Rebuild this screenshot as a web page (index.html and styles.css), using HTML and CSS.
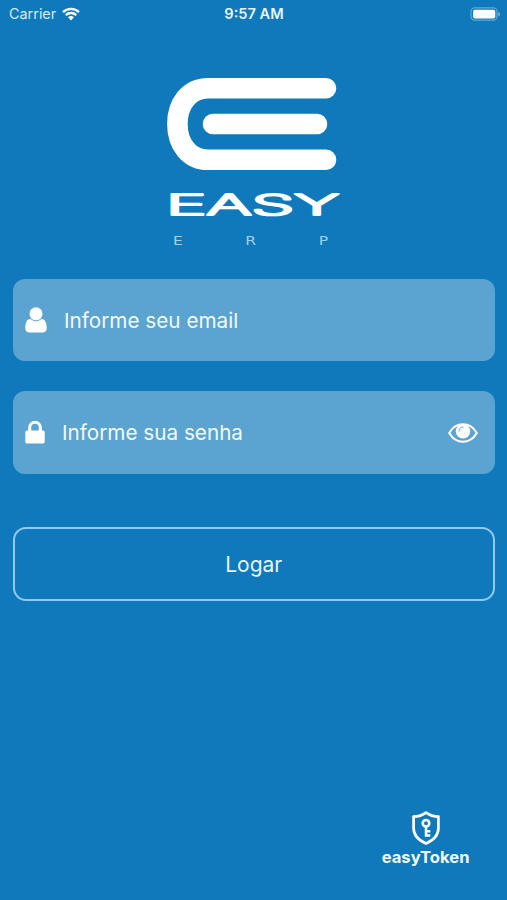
FILE: index.html
```
<!DOCTYPE html>
<html lang="pt-BR">
<head>
    <meta charset="UTF-8">
    <meta name="viewport" content="width=device-width, initial-scale=1.0">
    <title>Easy ERP - Login</title>
    <link rel="stylesheet" href="styles.css">
</head>
<body>
    <div class="status-bar">
        <div class="carrier">
            <span class="carrier-name">Carrier</span>
            <svg class="wifi" viewBox="0 0 18 14" width="18" height="14">
                <path d="M1 5.2a11.5 11.5 0 0 1 16 0M3.8 8.1a7.5 7.5 0 0 1 10.4 0" fill="none" stroke="#fff" stroke-width="2.3"/>
                <path d="M6 10.3a4.4 4.4 0 0 1 6 0L9 13.4z" fill="#fff"/>
            </svg>
        </div>
        <span class="time">9:57 AM</span>
        <svg class="battery" viewBox="0 0 31 14" width="31" height="14">
            <rect x="1" y=".8" width="26" height="12.4" rx="3.6" fill="none" stroke="#62a9d6" stroke-width="1.2"/>
            <rect x="3" y="2.7" width="22.3" height="8.8" rx="2" fill="#fff"/>
            <path d="M28.4 5v4.4c2-.7 2-3.7 0-4.4z" fill="#7dbbe2"/>
        </svg>
    </div>

    <div class="logo">
        <svg viewBox="0 0 174 93" width="174" height="93">
            <path d="M159 11.3H41C22 11.3 10.4 27 10.4 47S22 82.7 41 82.7H159" fill="none" stroke="#fff" stroke-width="20.6" stroke-linecap="round"/>
            <path d="M46 47H150" stroke="#fff" stroke-width="20.6" stroke-linecap="round"/>
        </svg>
        <svg class="logo-name" viewBox="0 0 180 36" width="180" height="36">
            <text x="2" y="29" textLength="173" lengthAdjust="spacingAndGlyphs">EASY</text>
        </svg>
        <div class="logo-sub"><span>E</span><span>R</span><span>P</span></div>
    </div>

    <form class="login-form">
        <label class="field">
            <svg class="user-icon" viewBox="0 0 22 26" width="22" height="26">
                <circle cx="11" cy="6.8" r="6.5" fill="#fff"/>
                <path d="M5.2 11.8C1.5 12.5.3 16.5.3 21c0 3 1.7 4.5 4.3 4.5h12.800c2.600 0 4.300-1.500 4.300-4.500 0-4.500-1.200-8.500-4.900-9.200-3.200 3.100-8.400 3.100-11.600 0z" fill="#fff"/>
            </svg>
            <input type="text" placeholder="Informe seu email">
        </label>

        <label class="field">
            <svg class="lock-icon" viewBox="0 0 20 24" width="20" height="24">
                <path d="M4.7 12V7.500a5.300 5.300 0 0 1 10.600 0V12" fill="none" stroke="#fff" stroke-width="3"/>
                <rect x=".3" y="10.6" width="19.4" height="12.8" rx="1.6" fill="#fff"/>
            </svg>
            <input type="password" placeholder="Informe sua senha">
            <svg class="eye-icon" viewBox="0 0 30 20" width="30" height="20">
                <path d="M1.2 10C4.5 4.3 9.5 1.3 15 1.3S25.5 4.3 28.8 10C25.5 15.7 20.5 18.7 15 18.7S4.5 15.7 1.2 10z" fill="none" stroke="#fff" stroke-width="2.1" stroke-linejoin="round"/>
                <circle cx="15" cy="8.3" r="7.2" fill="#fff"/>
                <path d="M11 8c0-2.3 1.7-3.9 4-3.9" fill="none" stroke="#5ba3d0" stroke-width="1" stroke-linecap="round"/>
            </svg>
        </label>

        <button type="submit">Logar</button>
    </form>

    <a class="token" href="#">
        <svg viewBox="0 0 28 34" width="28" height="34">
            <path d="M14 1.6C10.5 4.2 6 5.6 1.6 5.7V17c0 7.5 5.4 12.5 12.4 15.4C21 29.5 26.4 24.5 26.4 17V5.7C22 5.6 17.5 4.2 14 1.6z" fill="none" stroke="#fff" stroke-width="2.7" stroke-linejoin="round"/>
            <circle cx="14" cy="12.3" r="3.3" fill="none" stroke="#fff" stroke-width="2.6"/>
            <path d="M14 16v9.800M14 20.300h4.300M14 24.400h4.300" fill="none" stroke="#fff" stroke-width="2.5"/>
        </svg>
        <span>easyToken</span>
    </a>
</body>
</html>
```

FILE: styles.css
```
* {
    box-sizing: border-box;
}
body {
    font-family: Inter, "Liberation Sans", sans-serif;
    background-color: #1079bb;
    color: #ffffff;
    margin: 0;
    height: 900px;
    display: flex;
    flex-direction: column;
}
.status-bar {
    display: grid;
    grid-template-columns: 1fr auto 1fr;
    align-items: center;
    height: 28px;
    padding: 0 6px 1px 9px;
    font-size: 14.4px;
}
.carrier {
    display: flex;
    align-items: center;
    gap: 6px;
}
.carrier-name {
    color: #d3ebfa;
}
.time {
    font-weight: 600;
    color: #e6f5fd;
    font-size: 14.6px;
    margin-right: 2px;
}
.battery {
    justify-self: end;
}
.logo {
    display: flex;
    flex-direction: column;
    align-items: center;
    margin-top: 49px;
    height: 201.7px;
}
.logo-name {
    margin-top: 16px;
}
.logo-name text {
    font-size: 28px;
    font-weight: 200;
    fill: #ffffff;
    stroke: #ffffff;
    stroke-width: 2.2px;
    stroke-linejoin: round;
}
.logo-sub {
    display: flex;
    justify-content: space-between;
    width: 115px;
    margin: 12px 7px 0 0;
    font-family: "DejaVu Sans", sans-serif;
    font-size: 11.5px;
    line-height: 14px;
    color: #9fd0ee;
    transform: scaleX(1.35);
}
.login-form {
    padding: 0 12.5px 0 13px;
}
.field {
    display: flex;
    align-items: center;
    gap: 17px;
    height: 82.7px;
    margin-bottom: 29.6px;
    padding: 0 17px 0 12px;
    background-color: #5ba3d0;
    border-radius: 12px;
}
.field input {
    flex: 1;
    min-width: 0;
    padding: 0;
    border: none;
    outline: none;
    background: none;
    color: #ffffff;
    font-family: inherit;
    font-size: 20.7px;
}
.field input::placeholder {
    color: #f1faff;
    opacity: 1;
}
.eye-icon {
    margin-top: 2px;
}
button {
    display: block;
    width: 100%;
    height: 74px;
    margin-top: 53.7px;
    padding: 0;
    border: 2px solid #8dcaf0;
    border-radius: 13px;
    background: none;
    color: #e6f6ff;
    font-family: inherit;
    font-size: 21px;
    cursor: pointer;
}
.token {
    display: flex;
    flex-direction: column;
    align-items: center;
    align-self: flex-end;
    margin: auto 37.5px 33px 0;
    color: #f1faff;
    font-size: 16.6px;
    font-weight: 700;
    line-height: 20px;
    text-decoration: none;
}
.token span {
    margin-top: 2px;
}
```
